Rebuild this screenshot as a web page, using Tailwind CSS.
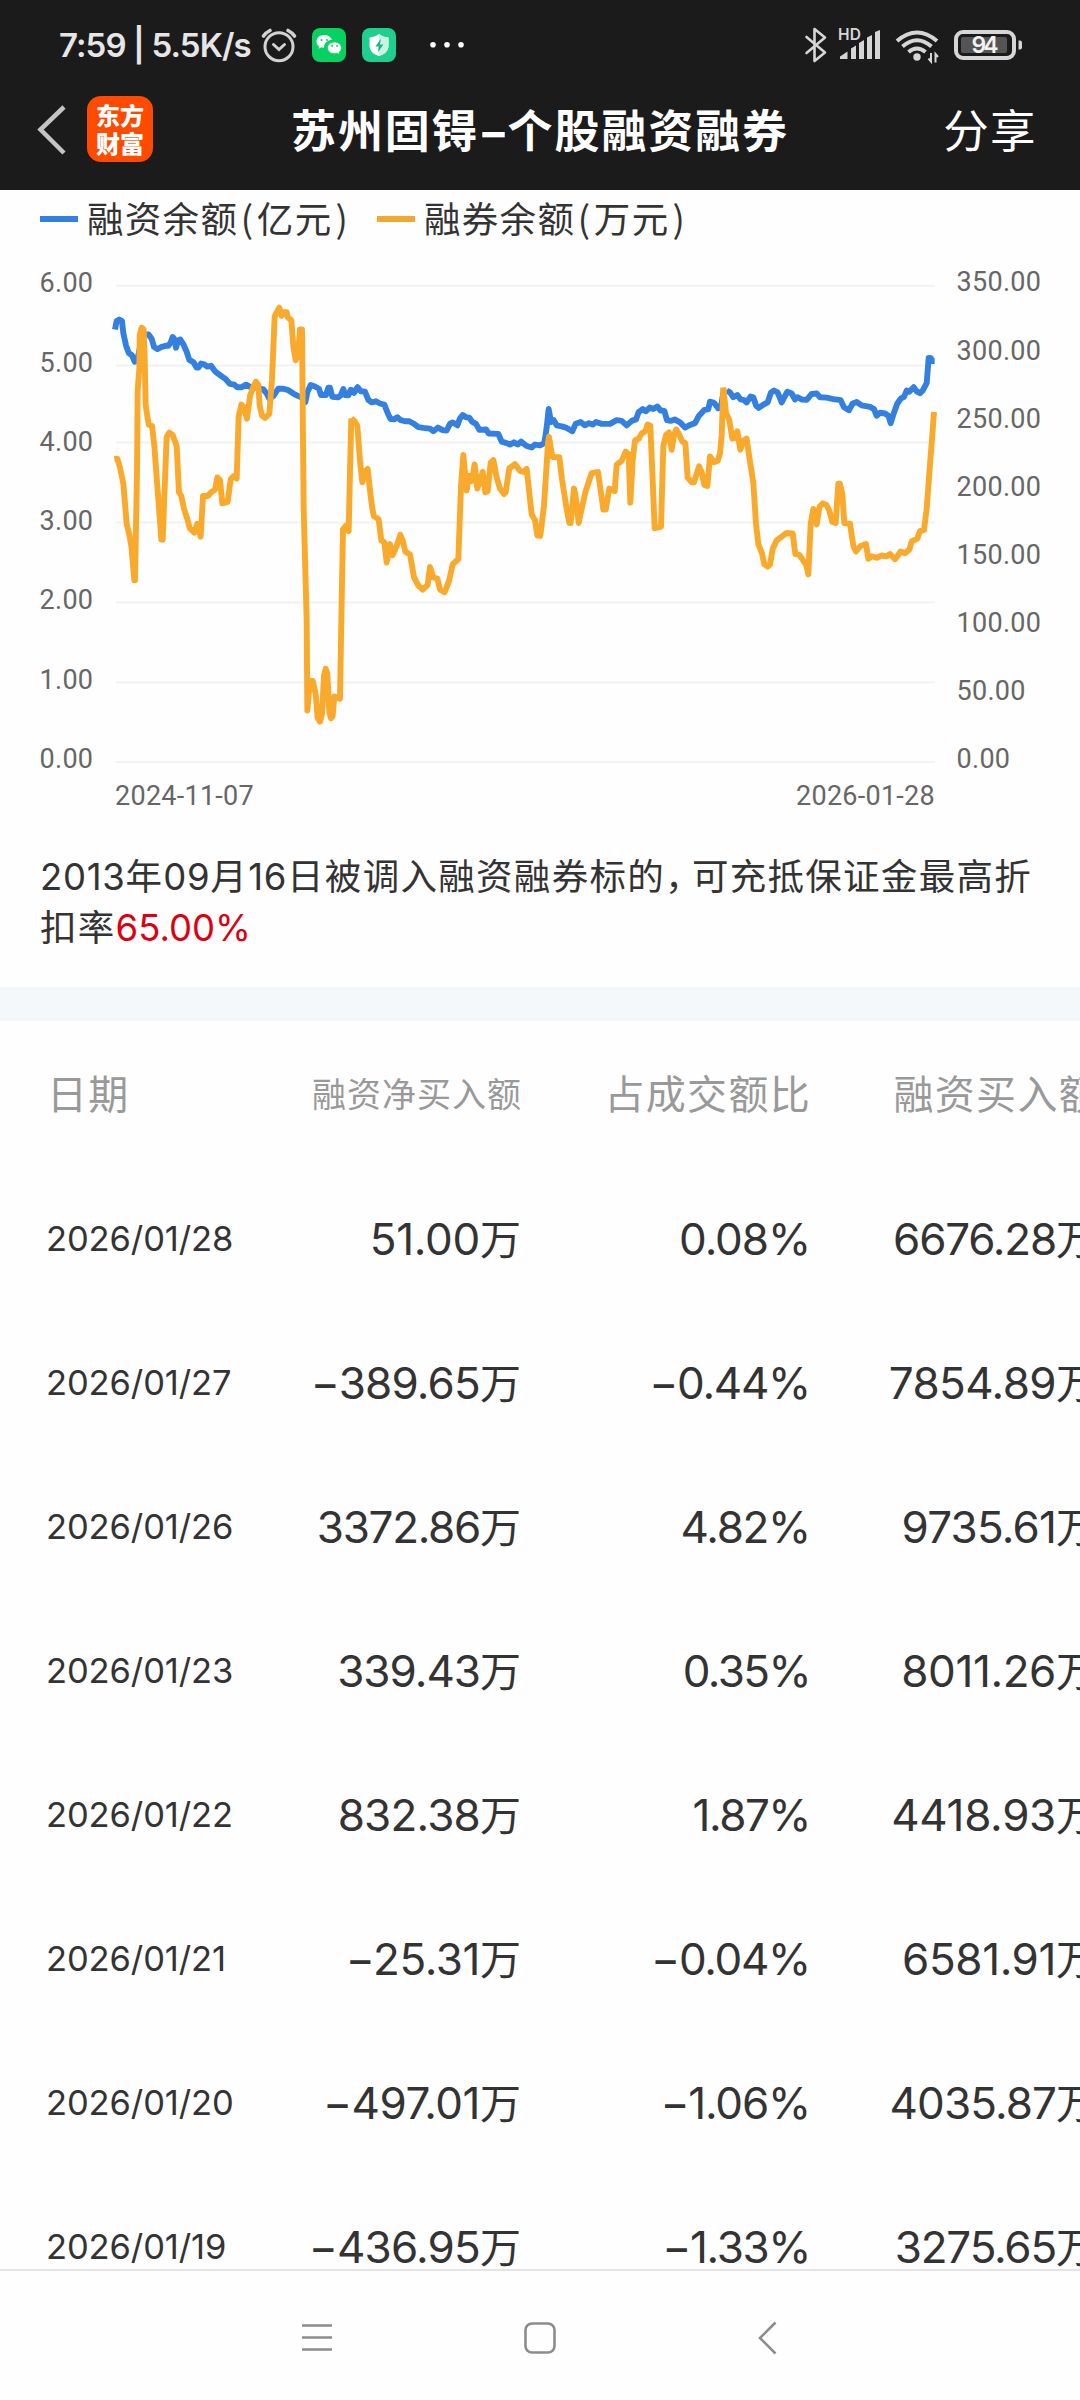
<!DOCTYPE html>
<html lang="zh-CN">
<head>
<meta charset="utf-8">
<title>苏州固锝-个股融资融券</title>
<script src="https://cdn.jsdelivr.net/npm/@tailwindcss/browser@4"></script>
</head>
<body class="w-[1080px] h-[2400px] overflow-hidden bg-[#fefefe] flex flex-col text-[#333] font-['Inter','Noto_Sans_CJK_SC',sans-serif]">

<header class="h-[190px] shrink-0 bg-[#1b1b1b] text-white flex flex-col">
  <div class="h-[89px] flex items-center justify-between">
    <div class="flex items-center pl-[59px]">
      <span class="w-[196px] pt-[2px] whitespace-nowrap text-[33px] font-semibold leading-none text-[#e6e6e6] tracking-[-0.9px]">7:59 | 5.5K/s</span>
      <svg class="w-[215px] h-[89px]" viewBox="255 0 215 89" fill="none">
        <g stroke="#d2d2d2" stroke-width="3" stroke-linecap="round">
          <circle cx="279" cy="46.7" r="14"/>
          <path d="M273.5 44.5l5.5 5 5.5-5"/>
          <path d="M263.5 36q2.500-3.500 6.500-5.500M294.500 36q-2.500-3.500-6.500-5.500" stroke-width="3.600"/>
        </g>
        <rect x="312" y="28" width="34" height="34" rx="8" fill="#07d160"/>
        <path d="M324 35c-4.200 0-7.500 2.800-7.500 6.400 0 2 1 3.700 2.700 4.900l-.8 2.500 3-1.500c.8.2 1.700.4 2.600.4.200-5 4-7.600 7.800-7.600-.6-3-3.800-5.100-7.800-5.100z" fill="#fff"/>
        <path d="M334.500 42c-4.200 0-7 2.700-7 5.900s2.800 5.800 7 5.800c.9 0 1.700-.1 2.500-.4l2.500 1.500-.6-2.300c1.600-1.100 2.500-2.700 2.500-4.600 0-3.200-3-5.900-6.900-5.900z" fill="#fff" stroke="#07d160" stroke-width=".8"/>
        <g fill="#07d160"><circle cx="321.500" cy="40" r="1"/><circle cx="327" cy="40" r="1"/><circle cx="332.200" cy="46" r=".9"/><circle cx="337" cy="46" r=".9"/></g>
        <rect x="362" y="28" width="34" height="34" rx="8" fill="#1fcf8e"/>
        <path d="M379 34c3 2.300 6 3.200 9.500 3.500v8c0 5.500-4 9-9.500 10.500-5.500-1.500-9.500-5-9.500-10.500v-8c3.500-.3 6.500-1.200 9.500-3.500z" fill="#fff"/>
        <path d="M379 34c3 2.300 6 3.200 9.500 3.500v8c0 5.500-4 9-9.500 10.500z" fill="#c9f3e2"/>
        <path d="M381 38.500l-5.500 8h3.300l-1 6 5.500-8h-3.500z" fill="#17b57b"/>
        <g fill="#fff"><circle cx="433" cy="44.700" r="2.800"/><circle cx="447" cy="44.700" r="2.800"/><circle cx="461" cy="44.700" r="2.800"/></g>
      </svg>
    </div>
    <svg class="w-[230px] h-[89px] mr-[50px]" viewBox="800 0 230 89" fill="none">
      <path d="M806.500 37l18.500 15.500-10.500 8.500v-32l10.500 8.500L806.500 53" stroke="#d6d6d6" stroke-width="2.600" stroke-linejoin="round" stroke-linecap="round"/>
      <text x="838" y="40.300" font-family="Inter" font-size="15.500" font-weight="600" fill="#d6d6d6" textLength="23">HD</text>
      <g fill="#d6d6d6">
        <path d="M840 59v-2.500l7.500-5V59zM851 59V48.500l5-3V59zM859 59V43l5-3V59zM867 59V37.500l5-2.500V59zM875 59V32l5-2v29z"/>
        <circle cx="917" cy="57" r="3.700"/>
      </g>
      <g stroke="#d6d6d6" stroke-width="4">
        <path d="M897 41q20-17 40 0"/>
        <path d="M902.500 46.500q14.500-12.500 29 0"/>
        <path d="M908.500 52q8.500-7 17 0"/>
      </g>
      <path d="M931 53v8.500l-2.500-3M935.500 62.500v-8.500l2.500 3" stroke="#d6d6d6" stroke-width="2"/>
      <rect x="956" y="32" width="58" height="26" rx="7" stroke="#d6d6d6" stroke-width="4"/>
      <rect x="961" y="37" width="46" height="16" rx="2" fill="#555"/>
      <path d="M1018.500 40.500h1.500q2 0 2 2v5q0 2-2 2h-1.500z" fill="#d6d6d6"/>
      <text x="985" y="53.300" text-anchor="middle" font-family="Inter" font-size="23" font-weight="600" fill="#f2f2f2" textLength="27">94</text>
    </svg>
  </div>
  <div class="h-[101px] grid grid-cols-[280px_520px_280px] items-start">
    <div class="flex pl-[36px] pt-[7px] items-center">
      <svg class="w-[32px] h-[66px]" viewBox="0 0 32 66" fill="none" stroke="#c4c4c4" stroke-width="4.500"><path d="M28 11L4.500 33.500 28 57"/></svg>
      <div class="ml-[19px] w-[66px] h-[66px] rounded-[14px] bg-[#ff4a00] flex flex-col items-center justify-center text-[24px] leading-[28px] font-black font-['Noto_Sans_CJK_SC']">
        <span>东方</span><span>财富</span>
      </div>
    </div>
    <h1 class="pt-[11px] text-center whitespace-nowrap text-[45px] leading-[64px] font-bold tracking-[1.900px]">苏州固锝<span class="inline-block w-[29px] text-center tracking-normal scale-x-150">-</span>个股融资融券</h1>
    <div class="pt-[11px] pr-[43px] text-right text-[45.500px] leading-[64px] tracking-[1.400px]">分享</div>
  </div>
</header>

<section class="h-[797px] shrink-0 flex flex-col">
  <div class="h-[60px] flex items-center pl-[40px] text-[36.500px] tracking-[1.300px] whitespace-nowrap font-['Noto_Sans_CJK_SC']">
    <span class="w-[38px] h-[6px] mb-[3px] bg-[#3380e0]"></span>
    <span class="ml-[9px] mb-[4px] w-[290px] leading-[56px]">融资余额<span class="mx-[2.500px]">(</span>亿元<span class="ml-[3px]">)</span></span>
    <span class="w-[38px] h-[6px] mb-[3px] bg-[#f2a92f]"></span>
    <span class="ml-[9px] mb-[4px] leading-[56px]">融券余额<span class="mx-[2.500px]">(</span>万元<span class="ml-[3px]">)</span></span>
  </div>
  <svg class="w-[1080px] h-[580px] shrink-0" viewBox="0 250 1080 580" fill="none">
    <g stroke="#f2f2f2" stroke-width="2">
      <path d="M116 285.700H935M116 365.400H935M116 442.600H935M116 522.600H935M116 602.500H935M116 682.500H935M116 762H935"/>
    </g>
    <g font-family="Roboto" font-size="27" fill="#666" letter-spacing=".3">
      <text x="39.500" y="291.500">6.00</text><text x="39.500" y="372">5.00</text><text x="39.500" y="451">4.00</text><text x="39.500" y="530">3.00</text><text x="39.500" y="609">2.00</text><text x="39.500" y="689">1.00</text><text x="39.500" y="768.200">0.00</text>
      <text x="956.500" y="291.200">350.00</text><text x="956.500" y="359.600">300.00</text><text x="956.500" y="427.800">250.00</text><text x="956.500" y="496">200.00</text><text x="956.500" y="564">150.00</text><text x="956.500" y="632.200">100.00</text><text x="956.500" y="700.300">50.00</text><text x="956.500" y="768.200">0.00</text>
      <text x="115" y="805" textLength="139">2024-11-07</text>
      <text x="796" y="805" textLength="139">2026-01-28</text>
    </g>
    <svg x="0" y="250" width="1080" height="580" viewBox="0 0 3240 1568" preserveAspectRatio="none" stroke-linejoin="round">
      <g stroke="#3380e0" stroke-width="5.900">
        <polyline vector-effect="non-scaling-stroke" points="345,215 350,192 358,188 366,192 370,225 378,258 386,278 396,285 404,302 412,298 425,240 435,228 445,228 455,240 462,262 472,268 485,262 497,259 505,259 512,250 518,235 524,242 528,264 534,245 541,242 550,255 560,275 568,297 580,303 590,318 595,318 603,307 612,309 622,315 633,313 645,328 660,338 678,350 690,362 703,364 712,371 725,371 738,364 750,370 768,372 790,377 800,388 808,402 820,395 835,375 850,375 865,379 880,388 895,395 908,400 916,411 922,385 932,365 945,369 957,375 963,392 978,392 985,372 990,372 997,397 1015,398 1022,393 1030,376 1036,392 1045,393 1052,378 1062,386 1073,371"/>
        <polyline vector-effect="non-scaling-stroke" transform="translate(1050 0)" points="2,378 12,384 23,371 32,382 45,383 55,405 65,412 78,409 90,415 103,418 115,445 122,457 133,458 142,452 152,460 165,463 178,463 190,469 205,479 220,481 240,483 250,490 264,480 278,487 290,488 300,470 308,466 322,474 330,455 338,446 348,452 358,453 366,464 378,470 388,486 400,486 408,485 416,496 445,497 455,518 470,522 480,526 492,520 503,526 513,518 530,530 545,534 555,526 570,528 583,522 590,480 596,430 603,465 611,460 620,474 635,477 650,481 667,490 677,470 692,465 704,474 717,468 728,472 738,465 755,470 780,470 800,460 815,462 830,474 845,462 858,458 866,438 878,430 888,436 899,426 910,430 922,423 932,434 943,435 951,460 962,462 974,458 990,466 1005,480 1020,473 1035,468 1047,448 1062,433 1075,430 1080,410 1092,413 1105,428 1113,425 1120,385 1130,380"/>
        <polyline vector-effect="non-scaling-stroke" transform="translate(2100 0)" points="80,380 90,385 100,398 112,392 122,404 132,406 140,412 152,396 160,398 168,420 176,427 190,418 203,412 213,385 222,380 233,385 245,412 252,400 262,383 275,388 285,404 292,398 305,404 320,405 335,389 350,388 360,398 380,399 400,403 422,406 432,425 447,433 458,415 470,411 485,420 510,424 522,430 530,448 540,440 555,442 565,448 572,468 580,445 592,415 602,402 612,397 620,380 628,383 641,371 650,382 660,387 668,380 680,360 686,292 692,292 697,300 704,300"/>
      </g>
      <g stroke="#f9aa2c" stroke-width="5.900">
        <polyline vector-effect="non-scaling-stroke" points="343,565 352,564 360,588 370,632 380,740 388,770 394,800 403,893 405,893 411,600 413,380 418,320 419,230 425,210 431,215 434,290 437,420 446,472 456,475 463,530 484,783 488,783 500,505 508,494 518,500 530,530 537,655 544,665 552,700 563,730 569,752 583,764 592,740 602,775 609,665 624,665 633,655 645,648 652,615 660,622 667,685 683,681 692,620 700,612 710,618 716,450 724,418 732,425 741,456 750,395 760,370 768,356 775,365 779,420 786,448 795,454 808,443 816,350 824,180 832,165 838,156 845,178 850,168 860,168 863,182 874,190 880,260 887,298 894,285 900,215 906,215 911,700 920,1000 922,1245 930,1165 938,1165 947,1200 953,1265 960,1275 966,1255 972,1150 977,1132 982,1145 988,1250 993,1266 998,1260 1003,1207 1020,1213 1024,1000 1029,755 1038,745 1046,760 1050,600 1054,455"/>
        <polyline vector-effect="non-scaling-stroke" transform="translate(1050 0)" points="4,455 13,462 22,475 30,570 37,628 45,600 53,592 60,650 67,700 72,720 86,728 94,785 103,790 110,845 120,795 128,825 140,800 151,770 158,785 166,815 180,823 192,885 205,907 218,918 233,905 240,857 250,885 262,888 270,918 284,925 297,895 308,850 325,835 333,640 340,554 350,650 357,610 365,625 374,580 382,645 390,625 398,600 406,655 413,652 422,575 430,568 440,615 450,645 462,660 467,655 478,590 495,579 510,597 522,600 530,592 536,640 545,715 555,730 562,772 571,773 582,690 590,580 594,520 597,505 607,560 628,560 636,620 650,700 658,738 662,738 672,645 676,660 686,738 695,700 706,655 715,630 725,603 744,600 752,650 760,702 767,702 778,645 794,652 800,580 815,570 827,545 836,552 841,683 848,570 855,515 866,510 876,495 886,490 893,472 901,475 906,580 914,752 933,748 940,530 948,500 957,493 965,540 972,500 979,485 988,500 997,518 1006,522 1013,615 1025,628 1032,628 1047,585 1055,600 1063,635 1072,638 1080,558 1092,574 1103,570 1110,550 1115,500 1120,372"/>
        <polyline vector-effect="non-scaling-stroke" transform="translate(2100 0)" points="70,372 78,440 88,460 97,510 105,508 112,490 121,540 130,515 140,510 148,560 160,630 168,740 175,795 186,820 193,850 203,856 210,850 218,808 230,785 245,775 260,765 278,766 286,822 298,824 310,840 318,850 325,877 332,740 340,700 350,742 358,695 368,685 380,690 388,705 397,735 407,738 415,632 420,632 427,660 433,738 450,740 460,800 468,815 482,800 498,795 505,835 515,828 530,832 545,826 560,828 570,822 585,836 602,815 615,820 628,810 635,788 652,780 660,760 672,757 680,700 690,580 697,500 702,438"/>
      </g>
    </svg>
  </svg>
  <p class="pt-[22px] pl-[40px] text-[36.500px] leading-[51px] whitespace-nowrap tracking-[1.300px]"><span class="tracking-[0.700px]">2013</span>年<span class="tracking-[0.700px]">09</span>月<span class="tracking-[0.700px]">16</span>日被调入融资融券标的<span class="mr-[-11px]">，</span>可充抵保证金最高折<br>扣率<span class="text-[#dc0012] tracking-normal">65.00%</span></p>
</section>

<div class="h-[34px] shrink-0 bg-[#f5f8fb]"></div>

<section class="h-[1248px] shrink-0 overflow-hidden">
  <div class="w-[1097px] text-[44px] whitespace-nowrap [&>div]:h-[144px] [&>div]:pt-[3px] [&>div]:grid [&>div]:grid-cols-[233px_288px_288px_288px] [&>div]:items-center [&>div]:text-right [&_b]:font-normal [&_b]:text-[41px] [&_b]:tracking-normal">
    <div class="text-[#999] text-[40px] tracking-[1.300px]"><span class="text-left pl-[47px]">日期</span><span class="-mr-[1px] text-[34px] tracking-[1px]">融资净买入额</span><span class="-mr-[2px]">占成交额比</span><span class="-mr-[3px]">融资买入额</span></div>
    <div><span class="text-left pl-[46px] text-[34.500px] tracking-[-0.100px]">2026/01/28</span><span class="tracking-[-0.300px]">51.00<b>万</b></span><span class="-mr-[1px] tracking-[-1.100px]">0.08%</span><span class="tracking-[-1.200px]">6676.28<b>万</b></span></div>
    <div><span class="text-left pl-[46px] text-[34.500px] tracking-[-0.100px]">2026/01/27</span><span class="tracking-[-0.800px]">−389.65<b>万</b></span><span class="-mr-[1px] tracking-[-1.300px]">−0.44%</span><span class="tracking-[-0.600px]">7854.89<b>万</b></span></div>
    <div><span class="text-left pl-[46px] text-[34.500px] tracking-[-0.100px]">2026/01/26</span><span class="tracking-[-1.300px]">3372.86<b>万</b></span><span class="-mr-[1px] tracking-[-1.300px]">4.82%</span><span class="tracking-[-0.800px]">9735.61<b>万</b></span></div>
    <div><span class="text-left pl-[46px] text-[34.500px] tracking-[-0.100px]">2026/01/23</span><span class="tracking-[-1px]">339.43<b>万</b></span><span class="-mr-[1px] tracking-[-1.600px]">0.35%</span><span class="tracking-[-0.400px]">8011.26<b>万</b></span></div>
    <div><span class="text-left pl-[46px] text-[34.500px] tracking-[-0.100px]">2026/01/22</span><span class="tracking-[-0.800px]">832.38<b>万</b></span><span class="-mr-[1px] tracking-[-1.500px]">1.87%</span><span class="tracking-[-0.300px]">4418.93<b>万</b></span></div>
    <div><span class="text-left pl-[46px] text-[34.500px] tracking-[-0.100px]">2026/01/21</span><span class="tracking-[-0.400px]">−25.31<b>万</b></span><span class="-mr-[1px] tracking-[-1.300px]">−0.04%</span><span class="tracking-[-0.400px]">6581.91<b>万</b></span></div>
    <div><span class="text-left pl-[46px] text-[34.500px] tracking-[-0.100px]">2026/01/20</span><span class="tracking-[-0.500px]">−497.01<b>万</b></span><span class="-mr-[1px] tracking-[-1.200px]">−1.06%</span><span class="tracking-[-0.900px]">4035.87<b>万</b></span></div>
    <div><span class="text-left pl-[46px] text-[34.500px] tracking-[-0.100px]">2026/01/19</span><span class="tracking-[-0.800px]">−436.95<b>万</b></span><span class="-mr-[1px] tracking-[-1.400px]">−1.33%</span><span class="tracking-[-1.200px]">3275.65<b>万</b></span></div>
  </div>
</section>

<nav class="h-[131px] shrink-0 border-t-2 border-[#e4e4e4] bg-[#fefefe]">
  <svg class="w-[1080px] h-[129px]" viewBox="0 2271 1080 129" fill="none" stroke="#8c8c8c" stroke-width="2.600">
    <path d="M302 2325.500h30M302 2337.500h30M302 2349.500h30"/>
    <rect x="525.500" y="2323.500" width="29" height="29" rx="6.500"/>
    <path d="M775.500 2322.500L760 2338l15.500 15.500"/>
  </svg>
</nav>
</body>
</html>
